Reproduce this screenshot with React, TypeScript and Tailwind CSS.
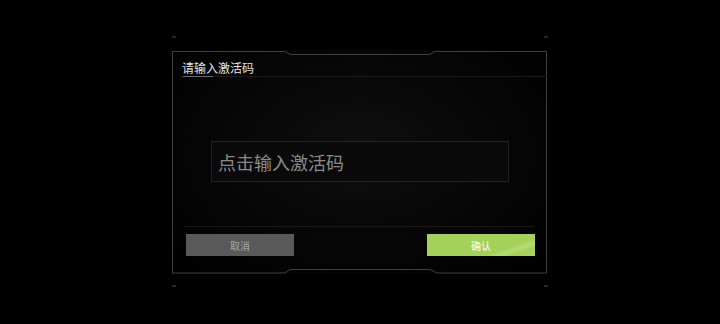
export default function App() {
  return (
    <div
      className="w-[720px] h-[324px] bg-black pl-[172px] pt-[50px] overflow-hidden"
      style={{ fontFamily: '"Noto Sans CJK SC", "Noto Sans", sans-serif' }}
    >
      <div className="relative w-[375px] h-[224px] bg-[radial-gradient(ellipse_at_50%_45%,#0f0f0f_0%,#060606_55%,#000_100%)]">
        {/* frame outline */}
        <svg
          className="absolute left-0 top-0 overflow-visible pointer-events-none"
          width="375"
          height="224"
          viewBox="0 0 375 224"
          fill="none"
        >
          <path
            d="M0.5 223 L0.5 1.5 L113 1.5 L118 4.5 L258 4.5 L263 1.5 L374.5 1.5 L374.5 223 L265 223 L258 219.5 L118 219.5 L113 223 Z"
            stroke="#404040"
            strokeWidth="1"
          />
          <path d="M0 -13 H4" stroke="#333" strokeWidth="1.5" />
          <path d="M372 -13 H376" stroke="#333" strokeWidth="1.5" />
          <path d="M0 236 H4" stroke="#333" strokeWidth="1.5" />
          <path d="M372 236 H376" stroke="#333" strokeWidth="1.5" />
        </svg>

        <div className="relative flex flex-col">
          {/* header */}
          <div className="relative ml-[8px] h-[27px] pt-[10px] pl-[2px] border-b border-[#1a1a1a]">
            <span className="block text-[12px] leading-[16px] text-[#e6e6e6]">请输入激活码</span>
            <div className="absolute left-[3px] bottom-[-1px] w-[30px] h-px bg-[#6a6a6a]" />
          </div>

          {/* input */}
          <div className="mt-[64px] ml-[39px] w-[298px] h-[41px] border border-[#222] bg-[#0a0a0a] flex items-center px-[6px]">
            <span className="text-[18px] leading-none text-[#8a8a8a]">点击输入激活码</span>
          </div>

          {/* separator */}
          <div className="mt-[44px] mx-[13px] h-px bg-[#181818]" />

          {/* buttons */}
          <div className="mt-[7px] pl-[14px] pr-[12px] flex justify-between">
            <button className="w-[108px] h-[22px] bg-[#595959] text-[10px] text-[#a8a8a8] flex items-center justify-center">
              取消
            </button>
            <button className="w-[108px] h-[22px] bg-[linear-gradient(160deg,#a4d15a_0%,#a4d15a_70%,#b4dc72_78%,#a4d15a_86%,#a9d462_100%)] text-[10px] text-white flex items-center justify-center">
              确认
            </button>
          </div>
        </div>
      </div>
    </div>
  )
}
